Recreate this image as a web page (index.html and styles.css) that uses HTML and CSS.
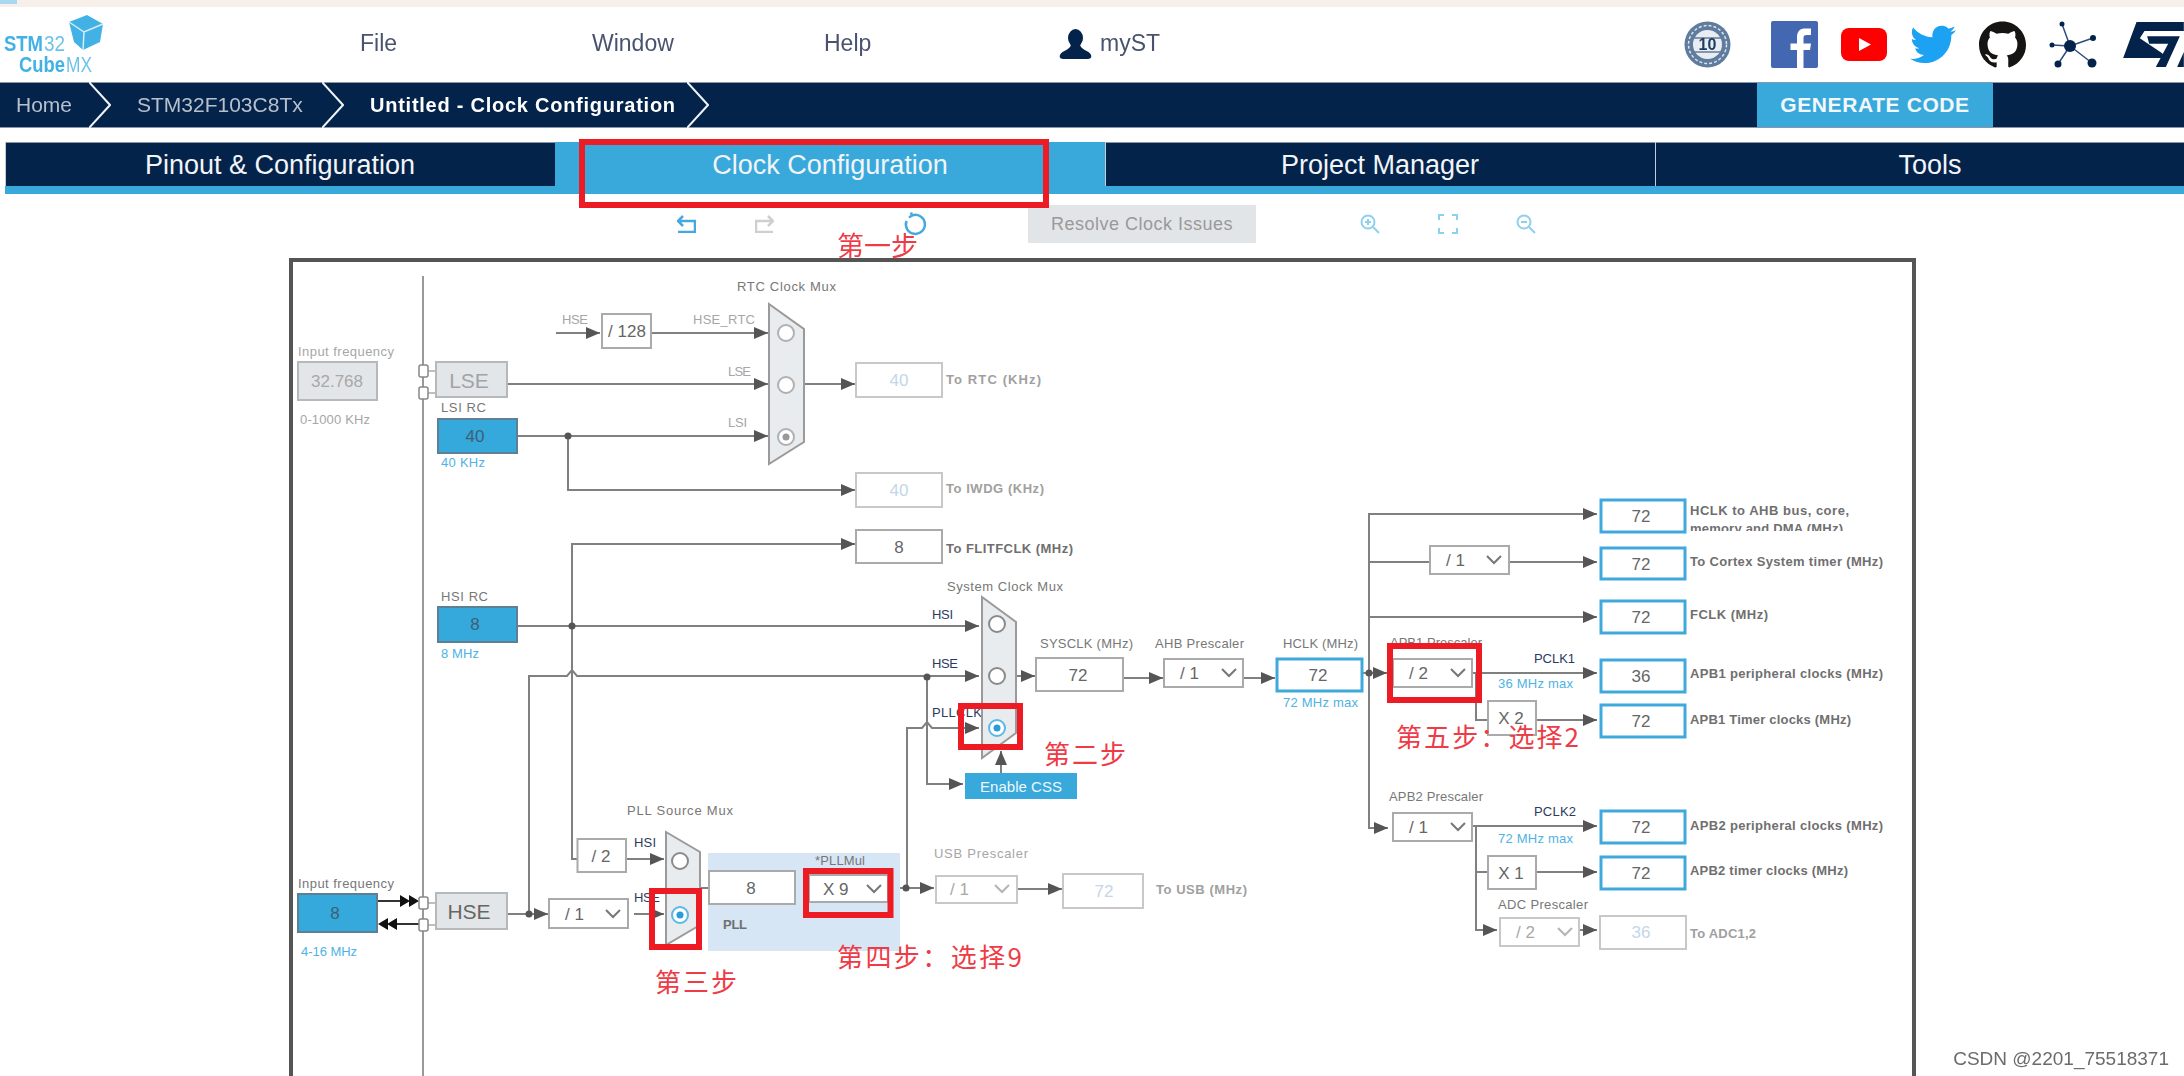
FILE: index.html
```html
<!DOCTYPE html>
<html lang="zh-CN">
<head>
    <meta charset="UTF-8">
    <meta name="viewport" content="width=device-width, initial-scale=1.0">
    <title>STM32CubeMX - Clock Configuration</title>
    <link rel="stylesheet" href="styles.css">
</head>
<body>
<div class="app">
    <div class="topstrip"><span class="topstrip-tab"></span></div>

    <header class="header">
        <svg class="logo" viewBox="0 0 110 75" width="110" height="75">
            <path class="logo-cube" d="M87 8 103 17 100 35 83 43 74 35 69 15Z"/>
            <path class="logo-edge" d="M69 15 84 25 103 17M84 25 83 43"/>
            <text class="logo-text logo-bold" x="4" y="44" textLength="39" lengthAdjust="spacingAndGlyphs">STM</text>
            <text class="logo-text" x="44" y="44" textLength="21" lengthAdjust="spacingAndGlyphs">32</text>
            <text class="logo-text logo-bold" x="19" y="65" textLength="46" lengthAdjust="spacingAndGlyphs">Cube</text>
            <text class="logo-text" x="66" y="65" textLength="26" lengthAdjust="spacingAndGlyphs">MX</text>
        </svg>
        <nav class="menu">
            <a>File</a>
            <a>Window</a>
            <a>Help</a>
        </nav>
        <div class="user">
            <svg viewBox="0 0 33 31" width="33" height="31"><ellipse cx="16.5" cy="9" rx="7.5" ry="9"/><path d="M12 15C12 21 3 21 1 26 0 29 2 30 5 30H28C31 30 33 29 32 26 30 21 21 21 21 15Z"/></svg>
            <span>myST</span>
        </div>
        <div class="social">
            <svg class="badge" viewBox="0 0 47 47" width="47" height="47">
                <circle cx="23.5" cy="23.5" r="23" fill="#5f7b9d"/>
                <circle cx="23.5" cy="23.5" r="19" fill="none" stroke="#dfe5ec" stroke-width="1.5" stroke-dasharray="3 2"/>
                <circle cx="23.5" cy="23.5" r="14.5" fill="#e9edf2"/>
                <path d="M10 17 37 17M10 31 37 31" stroke="#5f7b9d" stroke-width="1.5"/>
                <text class="badge-text" x="23.5" y="29" text-anchor="middle">10</text>
            </svg>
            <svg viewBox="0 0 47 47" width="47" height="47">
                <rect width="47" height="47" rx="2" fill="#4367b1"/>
                <path fill="#fff" d="M26 47V29H19.5V22.5H26V16C26 10 29.5 7.5 34 7.5H40V14H36C33 14 32.5 15 32.5 17V22.5H40L39 29H32.5V47Z"/>
            </svg>
            <svg viewBox="0 0 46 33" width="46" height="33">
                <rect width="46" height="33" rx="8" fill="#fe0000"/>
                <path fill="#fff" d="M18 10V23L30 16.5Z"/>
            </svg>
            <svg viewBox="0 2.3 24 19.5" width="46" height="39"><path fill="#1da1f2" d="M23.953 4.57a10 10 0 01-2.825.775 4.958 4.958 0 002.163-2.723c-.951.555-2.005.959-3.127 1.184a4.92 4.92 0 00-8.384 4.482C7.69 8.095 4.067 6.13 1.64 3.162a4.822 4.822 0 00-.666 2.475c0 1.71.87 3.213 2.188 4.096a4.904 4.904 0 01-2.228-.616v.06a4.923 4.923 0 003.946 4.827 4.996 4.996 0 01-2.212.085 4.936 4.936 0 004.604 3.417 9.867 9.867 0 01-6.102 2.105c-.39 0-.779-.023-1.17-.067a13.995 13.995 0 007.557 2.209c9.053 0 13.998-7.496 13.998-13.985 0-.21 0-.42-.015-.63A9.935 9.935 0 0024 4.59z"/></svg>
            <svg viewBox="0 0 24 24" width="47" height="47"><path fill="#161514" d="M12 .297c-6.63 0-12 5.373-12 12 0 5.303 3.438 9.8 8.205 11.385.6.113.82-.258.82-.577 0-.285-.01-1.04-.015-2.04-3.338.724-4.042-1.61-4.042-1.61C4.422 18.07 3.633 17.7 3.633 17.7c-1.087-.744.084-.729.084-.729 1.205.084 1.838 1.236 1.838 1.236 1.07 1.835 2.809 1.305 3.495.998.108-.776.417-1.305.76-1.605-2.665-.3-5.466-1.332-5.466-5.93 0-1.31.465-2.38 1.235-3.22-.135-.303-.54-1.523.105-3.176 0 0 1.005-.322 3.3 1.23.96-.267 1.98-.399 3-.405 1.02.006 2.04.138 3 .405 2.28-1.552 3.285-1.23 3.285-1.23.645 1.653.24 2.873.12 3.176.765.84 1.23 1.91 1.23 3.22 0 4.61-2.805 5.625-5.475 5.92.42.36.81 1.096.81 2.22 0 1.606-.015 2.896-.015 3.286 0 .315.21.69.825.57C20.565 22.092 24 17.592 24 12.297c0-6.627-5.373-12-12-12"/></svg>
            <svg viewBox="2049 20 48 47" width="48" height="47">
                <path fill="none" stroke="#2c4f78" stroke-width="1.5" d="M2070 45 2062 23M2070 45 2093 37M2070 45 2052 44M2070 45 2058 63M2070 45 2092 62"/>
                <g fill="#03234b"><circle cx="2070" cy="45" r="6"/><circle cx="2062" cy="23" r="2.5"/><circle cx="2093" cy="37" r="3"/><circle cx="2052" cy="44" r="2.5"/><circle cx="2058" cy="63" r="3.5"/><circle cx="2092" cy="62" r="4.5"/></g>
            </svg>
            <svg class="st-logo" viewBox="1360 35 182 135" width="61" height="45">
                <path fill="#03234b" d="M1400 35H1542V62H1424L1410 84 1476 128C1486 135 1484 143 1470 143H1360Z"/>
                <path fill="#03234b" d="M1432 78H1530L1488 170H1458L1495 100H1438ZM1522 170 1542 125V170Z"/>
            </svg>
        </div>
    </header>

    <div class="navbar">
        <div class="crumb crumb-home"><span>Home</span><svg viewBox="0 0 22 46" width="22" height="46"><path d="M0 0 21 23 0 46"/></svg></div>
        <div class="crumb crumb-mcu"><span>STM32F103C8Tx</span><svg viewBox="0 0 22 46" width="22" height="46"><path d="M0 0 21 23 0 46"/></svg></div>
        <div class="crumb crumb-current"><span>Untitled - Clock Configuration</span><svg viewBox="0 0 22 46" width="22" height="46"><path d="M0 0 21 23 0 46"/></svg></div>
        <button class="generate">GENERATE CODE</button>
    </div>

    <div class="tabs">
        <div class="tab">Pinout &amp; Configuration</div>
        <div class="tab active">Clock Configuration</div>
        <div class="tab">Project Manager</div>
        <div class="tab">Tools</div>
    </div>

    <div class="toolbar">
        <svg class="tool undo" viewBox="0 0 19 18" width="19" height="18"><path d="M6 1 1 6 6 11M1 6H18V17H1"/></svg>
        <svg class="tool redo" viewBox="0 0 19 18" width="19" height="18"><path d="M13 1 18 6 13 11M18 6H1V17H18"/></svg>
        <svg class="tool refresh" viewBox="0 0 24 24" width="24" height="24"><path d="M9 3.500A9.500 9.500 0 1 1 3.500 9M8 0.500 9 3.500 6 5.500"/></svg>
        <button class="resolve">Resolve Clock Issues</button>
        <svg class="tool soft zoom-in" viewBox="0 0 20 20" width="20" height="20"><circle cx="8" cy="8" r="6.5"/><path d="M13 13 19 19M8 5V11M5 8H11"/></svg>
        <svg class="tool soft fit" viewBox="0 0 20 20" width="20" height="20"><path d="M1 6V1H6M14 1H19V6M19 14V19H14M6 19H1V14"/></svg>
        <svg class="tool soft zoom-out" viewBox="0 0 20 20" width="20" height="20"><circle cx="8" cy="8" r="6.5"/><path d="M13 13 19 19M5 8H11"/></svg>
    </div>

    <!-- clock tree: coordinates are page pixels, hence the viewBox offset -->
    <svg class="tree" viewBox="0 258 2184 818" width="2184" height="818">
        <defs>
            <marker id="arrow" viewBox="0 0 14 12" refX="14" refY="6" markerWidth="14" markerHeight="12" markerUnits="userSpaceOnUse" orient="auto"><path d="M0 0 14 6 0 12Z" fill="#555"/></marker>
            <path id="chev" class="chev" d="M-7 -4 0 3 7 -4"/>
        </defs>

        <rect class="frame" x="291" y="260" width="1623" height="900"/>
        <path class="guide" d="M423 276V1076"/>

        <!-- wires -->
        <path class="wire" d="M556 333H600" marker-end="url(#arrow)"/>
        <path class="wire" d="M651 333H768" marker-end="url(#arrow)"/>
        <path class="wire" d="M507 384H768" marker-end="url(#arrow)"/>
        <path class="wire" d="M517 436H768" marker-end="url(#arrow)"/>
        <path class="wire" d="M804 384H855" marker-end="url(#arrow)"/>
        <path class="wire" d="M568 436V490H855" marker-end="url(#arrow)"/>
        <path class="wire" d="M572 626V544H855" marker-end="url(#arrow)"/>
        <path class="wire" d="M517 626H979" marker-end="url(#arrow)"/>
        <path class="wire" d="M572 626V859H577"/>
        <path class="wire" d="M529 914V676H567L572 670 577 676H979" marker-end="url(#arrow)"/>
        <path class="wire" d="M507 914H548" marker-end="url(#arrow)"/>
        <path class="wire" d="M626 859H664" marker-end="url(#arrow)"/>
        <path class="wire" d="M634 914H664" marker-end="url(#arrow)"/>
        <path class="wire" d="M700 888H709M795 888H809"/>
        <path class="wire" d="M888 888H934" marker-end="url(#arrow)"/>
        <path class="wire" d="M1017 889H1062" marker-end="url(#arrow)"/>
        <path class="wire" d="M907 888V728H922L927 722 932 728H979" marker-end="url(#arrow)"/>
        <path class="wire" d="M927 677V784H963" marker-end="url(#arrow)"/>
        <path class="wire" d="M1001 773V751" marker-end="url(#arrow)"/>
        <path class="wire" d="M1016 676H1035" marker-end="url(#arrow)"/>
        <path class="wire" d="M1123 678H1163" marker-end="url(#arrow)"/>
        <path class="wire" d="M1243 678H1275" marker-end="url(#arrow)"/>
        <path class="wire" d="M1362 673H1387" marker-end="url(#arrow)"/>
        <path class="wire" d="M1369 673V514H1597" marker-end="url(#arrow)"/>
        <path class="wire" d="M1369 562H1430M1509 562H1597" marker-end="url(#arrow)"/>
        <path class="wire" d="M1369 617H1597" marker-end="url(#arrow)"/>
        <path class="wire" d="M1369 673V828H1388" marker-end="url(#arrow)"/>
        <path class="wire" d="M1472 673H1597" marker-end="url(#arrow)"/>
        <path class="wire" d="M1476 673V720H1488"/>
        <path class="wire" d="M1536 720H1597" marker-end="url(#arrow)"/>
        <path class="wire" d="M1472 826H1597" marker-end="url(#arrow)"/>
        <path class="wire" d="M1476 826V930H1497" marker-end="url(#arrow)"/>
        <path class="wire" d="M1476 872H1488"/>
        <path class="wire" d="M1536 872H1597" marker-end="url(#arrow)"/>
        <path class="wire" d="M1580 930H1597" marker-end="url(#arrow)"/>
        <path class="stub" d="M428 371H436M428 393H436M428 903H436M428 925H436"/>
        <path class="wire-dark" d="M377 901H402M396 924H419"/>
        <path class="head-dark" d="M400 895 410 901 400 907ZM409 895 419 901 409 907ZM388 918 378 924 388 930ZM397 918 387 924 397 930Z"/>
        <circle class="dot" cx="568" cy="436" r="3.5"/>
        <circle class="dot" cx="572" cy="626" r="3.5"/>
        <circle class="dot" cx="529" cy="914" r="3.5"/>
        <circle class="dot" cx="906" cy="888" r="3.5"/>
        <circle class="dot" cx="927" cy="677" r="3.5"/>
        <circle class="dot" cx="1369" cy="673" r="3.5"/>

        <rect class="pin" x="419" y="365" width="9" height="12" rx="2"/>
        <rect class="pin" x="419" y="387" width="9" height="12" rx="2"/>
        <rect class="pin" x="419" y="897" width="9" height="12" rx="2"/>
        <rect class="pin" x="419" y="919" width="9" height="12" rx="2"/>

        <!-- low speed sources -->
        <text class="lbl pale" x="298" y="351" textLength="96">Input frequency</text>
        <rect class="box off" x="298" y="362" width="79" height="38"/>
        <text class="val grey mid" x="337" y="381">32.768</text>
        <text class="lbl pale" x="300" y="419" textLength="70">0-1000 KHz</text>
        <rect class="box off" x="436" y="362" width="71" height="35"/>
        <text class="src grey mid" x="469" y="380">LSE</text>
        <text class="lbl" x="441" y="407" textLength="45">LSI RC</text>
        <rect class="box blue" x="438" y="419" width="79" height="34"/>
        <text class="val ink mid" x="475" y="436">40</text>
        <text class="lbl sky" x="441" y="462" textLength="44">40 KHz</text>

        <text class="lbl" x="737" y="286" textLength="99">RTC Clock Mux</text>
        <text class="lbl pale" x="562" y="319" textLength="26">HSE</text>
        <rect class="box" x="602" y="314" width="49" height="34"/>
        <text class="val mid" x="627" y="331">/ 128</text>
        <text class="lbl pale" x="693" y="319" textLength="62">HSE_RTC</text>
        <text class="lbl pale" x="728" y="371" textLength="23">LSE</text>
        <text class="lbl pale" x="728" y="422" textLength="19">LSI</text>
        <path class="mux" d="M769 304 804 329V442L769 464Z"/>
        <circle class="radio faint" cx="786" cy="333" r="8"/>
        <circle class="radio faint" cx="786" cy="385" r="8"/>
        <circle class="radio faint" cx="786" cy="437" r="8"/>
        <circle class="radio-dot grey-dot" cx="786" cy="437" r="3.5"/>

        <rect class="box dim" x="856" y="363" width="86" height="34"/>
        <text class="val pale-blue mid" x="899" y="380">40</text>
        <text class="lbl bold grey" x="946" y="379" textLength="95">To RTC (KHz)</text>
        <rect class="box dim" x="856" y="473" width="86" height="34"/>
        <text class="val pale-blue mid" x="899" y="490">40</text>
        <text class="lbl bold grey" x="946" y="488" textLength="98">To IWDG (KHz)</text>
        <rect class="box" x="856" y="530" width="86" height="33"/>
        <text class="val mid" x="899" y="547">8</text>
        <text class="lbl bold" x="946" y="548" textLength="127">To FLITFCLK (MHz)</text>

        <!-- high speed sources -->
        <text class="lbl" x="441" y="596" textLength="47">HSI RC</text>
        <rect class="box blue" x="438" y="607" width="79" height="35"/>
        <text class="val ink mid" x="475" y="624">8</text>
        <text class="lbl sky" x="441" y="653" textLength="38">8 MHz</text>

        <text class="lbl" x="298" y="883" textLength="96">Input frequency</text>
        <rect class="box blue" x="298" y="894" width="79" height="38"/>
        <text class="val ink mid" x="335" y="913">8</text>
        <text class="lbl sky" x="301" y="951" textLength="56">4-16 MHz</text>
        <rect class="box off" x="436" y="893" width="71" height="36"/>
        <text class="src ink-grey mid" x="469" y="911">HSE</text>

        <!-- PLL -->
        <rect class="pll" x="708" y="853" width="192" height="98"/>
        <text class="lbl" x="627" y="810" textLength="106">PLL Source Mux</text>
        <rect class="box" x="577.5" y="839" width="48.5" height="33"/>
        <text class="val mid" x="601" y="856">/ 2</text>
        <rect class="box" x="549" y="899" width="79" height="29"/>
        <text class="val" x="565" y="914">/ 1</text>
        <use href="#chev" x="613" y="914"/>
        <text class="lbl navy" x="634" y="842" textLength="22">HSI</text>
        <text class="lbl navy" x="634" y="897" textLength="26">HSE</text>
        <path class="mux" d="M666 832 700 852V925L666 945Z"/>
        <circle class="radio" cx="680" cy="861" r="8"/>
        <circle class="radio on" cx="680" cy="915" r="8"/>
        <circle class="radio-dot" cx="680" cy="915" r="3.5"/>
        <rect class="box" x="709" y="871" width="86" height="33"/>
        <text class="val mid" x="751" y="888">8</text>
        <text class="lbl" x="815" y="860" textLength="50">*PLLMul</text>
        <rect class="box" x="809" y="875" width="79" height="27"/>
        <text class="val" x="823" y="889">X 9</text>
        <use href="#chev" x="874" y="889"/>
        <text class="lbl bold" x="723" y="924" textLength="24">PLL</text>

        <!-- USB -->
        <text class="lbl pale" x="934" y="853" textLength="94">USB Prescaler</text>
        <rect class="box dim" x="936" y="876" width="81" height="27"/>
        <text class="val grey" x="950" y="889">/ 1</text>
        <use href="#chev" class="chev-off" x="1002" y="889"/>
        <rect class="box dim" x="1063" y="874" width="80" height="34"/>
        <text class="val pale-blue mid" x="1104" y="891">72</text>
        <text class="lbl bold grey" x="1156" y="889" textLength="91">To USB (MHz)</text>

        <!-- system clock -->
        <text class="lbl" x="947" y="586" textLength="116">System Clock Mux</text>
        <text class="lbl navy" x="932" y="614" textLength="21">HSI</text>
        <text class="lbl navy" x="932" y="663" textLength="26">HSE</text>
        <text class="lbl navy" x="932" y="712" textLength="50">PLLCLK</text>
        <path class="mux" d="M982 597 1016 622V733L982 758Z"/>
        <circle class="radio" cx="997" cy="624" r="8"/>
        <circle class="radio" cx="997" cy="676" r="8"/>
        <circle class="radio on" cx="997" cy="728" r="8"/>
        <circle class="radio-dot" cx="997" cy="728" r="3.5"/>
        <rect class="css" x="965" y="773" width="112" height="26"/>
        <text class="lbl white mid" x="1021" y="786" textLength="82">Enable CSS</text>

        <text class="lbl" x="1040" y="643" textLength="93">SYSCLK (MHz)</text>
        <rect class="box" x="1036" y="658" width="87" height="33"/>
        <text class="val mid" x="1078" y="675">72</text>
        <text class="lbl" x="1155" y="643" textLength="89">AHB Prescaler</text>
        <rect class="box" x="1164" y="659" width="79" height="28"/>
        <text class="val" x="1180" y="673">/ 1</text>
        <use href="#chev" x="1229" y="673"/>
        <text class="lbl" x="1283" y="643" textLength="75">HCLK (MHz)</text>
        <rect class="box hot" x="1277" y="659" width="85" height="32"/>
        <text class="val mid" x="1318" y="675">72</text>
        <text class="lbl sky" x="1283" y="702" textLength="75">72 MHz max</text>

        <!-- outputs -->
        <rect class="box" x="1430" y="546" width="79" height="28"/>
        <text class="val" x="1446" y="560">/ 1</text>
        <use href="#chev" x="1494" y="560"/>

        <rect class="box hot" x="1601" y="500" width="84" height="32"/>
        <text class="val mid" x="1641" y="516">72</text>
        <text class="lbl bold" x="1690" y="510" textLength="159">HCLK to AHB bus, core,</text>
        <text class="lbl bold" x="1690" y="528" textLength="153">memory and DMA (MHz)</text>
        <rect class="mask" x="1688" y="531" width="170" height="10"/>
        <rect class="box hot" x="1601" y="548" width="84" height="31"/>
        <text class="val mid" x="1641" y="564">72</text>
        <text class="lbl bold" x="1690" y="561" textLength="193">To Cortex System timer (MHz)</text>
        <rect class="box hot" x="1601" y="601" width="84" height="32"/>
        <text class="val mid" x="1641" y="617">72</text>
        <text class="lbl bold" x="1690" y="614" textLength="78">FCLK (MHz)</text>

        <text class="lbl" x="1390" y="642" textLength="92">APB1 Prescaler</text>
        <rect class="box" x="1393" y="659" width="79" height="28"/>
        <text class="val" x="1409" y="673">/ 2</text>
        <use href="#chev" x="1458" y="673"/>
        <text class="lbl navy" x="1534" y="658" textLength="41">PCLK1</text>
        <text class="lbl sky" x="1498" y="683" textLength="75">36 MHz max</text>
        <rect class="box hot" x="1601" y="660" width="84" height="32"/>
        <text class="val mid" x="1641" y="676">36</text>
        <text class="lbl bold" x="1690" y="673" textLength="193">APB1 peripheral clocks (MHz)</text>
        <rect class="box" x="1488" y="701" width="48" height="34"/>
        <text class="val mid" x="1511" y="718">X 2</text>
        <rect class="box hot" x="1601" y="705" width="84" height="32"/>
        <text class="val mid" x="1641" y="721">72</text>
        <text class="lbl bold" x="1690" y="719" textLength="161">APB1 Timer clocks (MHz)</text>

        <text class="lbl" x="1389" y="796" textLength="94">APB2 Prescaler</text>
        <rect class="box" x="1393" y="813" width="79" height="28"/>
        <text class="val" x="1409" y="827">/ 1</text>
        <use href="#chev" x="1458" y="827"/>
        <text class="lbl navy" x="1534" y="811" textLength="42">PCLK2</text>
        <text class="lbl sky" x="1498" y="838" textLength="75">72 MHz max</text>
        <rect class="box hot" x="1601" y="811" width="84" height="32"/>
        <text class="val mid" x="1641" y="827">72</text>
        <text class="lbl bold" x="1690" y="825" textLength="193">APB2 peripheral clocks (MHz)</text>
        <rect class="box" x="1488" y="856" width="48" height="33"/>
        <text class="val mid" x="1511" y="873">X 1</text>
        <rect class="box hot" x="1601" y="857" width="84" height="32"/>
        <text class="val mid" x="1641" y="873">72</text>
        <text class="lbl bold" x="1690" y="870" textLength="158">APB2 timer clocks (MHz)</text>

        <text class="lbl" x="1498" y="904" textLength="90">ADC Prescaler</text>
        <rect class="box dim" x="1500" y="918" width="79" height="28"/>
        <text class="val grey" x="1516" y="932">/ 2</text>
        <use href="#chev" class="chev-off" x="1565" y="932"/>
        <rect class="box dim" x="1600" y="916" width="86" height="33"/>
        <text class="val pale-blue mid" x="1641" y="932">36</text>
        <text class="lbl bold grey" x="1690" y="933" textLength="66">To ADC1,2</text>

        <!-- red notes added on top of the screenshot -->
        <rect class="note-box" x="652" y="891" width="47" height="56"/>
        <rect class="note-box" x="806" y="871" width="84.5" height="44"/>
        <rect class="note-box" x="961" y="706" width="59" height="41"/>
        <rect class="note-box" x="1390" y="646" width="89" height="54"/>
        <text class="note" x="1044" y="752" textLength="82">第二步</text>
        <text class="note" x="655" y="980" textLength="82">第三步</text>
        <text class="note" x="837" y="955" textLength="185">第四步：选择9</text>
        <text class="note" x="1396" y="735" textLength="183">第五步：选择2</text>
    </svg>

    <div class="tab-note"></div>
    <div class="step-one">第一步</div>
</div>
<div class="watermark">CSDN @2201_75518371</div>
</body>
</html>
```

FILE: styles.css
```css
html, body {
    margin: 0;
    padding: 0;
}
body {
    width: 2184px;
    height: 1076px;
    overflow: hidden;
    position: relative;
    background-color: white;
    font-family: "Liberation Sans", Arial, sans-serif;
}
.app {
    position: relative;
    width: 2184px;
    height: 1076px;
    overflow: hidden;
    filter: blur(0.7px);
}

/* browser strip */
.topstrip {
    height: 7px;
    background-color: #f7f0ea;
}
.topstrip-tab {
    display: block;
    width: 17px;
    height: 4px;
    background-color: #a9d8f0;
}

/* header */
.header {
    display: flex;
    align-items: center;
    height: 75px;
}
.logo {
    flex: none;
}
.logo-cube {
    fill: #42b1e5;
}
.logo-edge {
    fill: none;
    stroke: #d5eefa;
    stroke-width: 1.5;
}
.logo-text {
    font-size: 22px;
    fill: #6cc3ea;
}
.logo-bold {
    font-weight: bold;
    fill: #42b1e5;
}
.menu {
    display: flex;
    margin-left: 250px;
    margin-bottom: 2px;
    font-size: 23px;
    color: #49536f;
}
.menu a {
    width: 232px;
}
.user {
    display: flex;
    align-items: center;
    gap: 8px;
    margin-left: 3px;
    font-size: 23px;
    color: #49536f;
}
.user span {
    margin-bottom: 2px;
}
.user svg {
    fill: #03234b;
}
.social {
    display: flex;
    align-items: center;
    gap: 23px;
    margin-left: auto;
}
.social svg {
    flex: none;
}
.badge {
    margin-right: 17px;
}
.badge-text {
    font-size: 16px;
    font-weight: bold;
    fill: #1f3a5f;
}
.st-logo {
    margin-left: 3px;
}

/* breadcrumb bar */
.navbar {
    display: flex;
    align-items: center;
    height: 46px;
    background-color: #03234b;
    box-shadow: inset 0 1px 0 #8b97a8, inset 0 -1px 0 #8b97a8;
    font-size: 21px;
}
.crumb {
    display: flex;
    align-items: center;
    justify-content: space-between;
    height: 46px;
    box-sizing: border-box;
    color: #b7c0cc;
    white-space: nowrap;
}
.crumb svg {
    flex: none;
    fill: none;
    stroke: #f0f2f5;
    stroke-width: 2;
}
.crumb-home {
    width: 111px;
    padding-left: 16px;
}
.crumb-mcu {
    width: 233px;
    padding-left: 26px;
}
.crumb-current {
    width: 365px;
    padding-left: 26px;
    color: white;
    font-weight: bold;
    font-size: 20px;
    letter-spacing: 0.75px;
}
.generate {
    width: 236px;
    height: 44px;
    margin-left: auto;
    margin-right: 191px;
    border: none;
    background-color: #39a9dc;
    color: #f2f8fc;
    font-family: inherit;
    font-size: 21px;
    font-weight: bold;
    letter-spacing: 0.6px;
}

/* main tabs */
.tabs {
    display: grid;
    grid-template-columns: repeat(4, 550px);
    height: 52px;
    margin-top: 14px;
    margin-left: 5px;
    overflow: hidden;
    box-sizing: border-box;
    border-bottom: 8px solid #39a9dc;
}
.tab {
    display: flex;
    align-items: center;
    justify-content: center;
    padding-top: 2px;
    background-color: #03234b;
    color: #f2f4f7;
    font-size: 27px;
    box-shadow: inset 1px 0 0 #c5ccd6, inset 0 1px 0 #8b97a8;
}
.tab.active {
    background-color: #39a9dc;
    box-shadow: none;
}

/* toolbar */
.toolbar {
    display: flex;
    align-items: center;
    height: 64px;
    padding-left: 677px;
    padding-bottom: 4px;
    box-sizing: border-box;
}
.tool {
    flex: none;
    fill: none;
    stroke: #45a8de;
    stroke-width: 2.5;
}
.redo {
    margin-left: 59px;
    stroke: #cfcfcf;
}
.refresh {
    margin-left: 129px;
}
.tool.soft {
    stroke: #8fd0ee;
    stroke-width: 2;
}
.zoom-in {
    margin-left: 104px;
}
.fit {
    margin-left: 58px;
}
.zoom-out {
    margin-left: 58px;
}
.resolve {
    width: 228px;
    height: 38px;
    margin-left: 101px;
    border: none;
    background-color: #e2e5e8;
    color: #999;
    font-family: inherit;
    font-size: 18px;
    letter-spacing: 0.5px;
}

/* clock tree */
.tree {
    display: block;
}
.tree text {
    dominant-baseline: central;
}
.frame {
    fill: white;
    stroke: #555;
    stroke-width: 4;
}
.guide {
    stroke: #999;
    stroke-width: 2;
    fill: none;
}
.wire {
    fill: none;
    stroke: #808080;
    stroke-width: 2;
}
.stub {
    stroke: #aaa;
    stroke-width: 1.5;
}
.wire-dark {
    stroke: #333;
    stroke-width: 2;
}
.head-dark {
    fill: #111;
}
.dot {
    fill: #555;
}
.pin {
    fill: white;
    stroke: #888;
    stroke-width: 1.5;
}
.box {
    fill: white;
    stroke: #aaa;
    stroke-width: 2;
}
.box.off {
    fill: #e3e6e8;
    stroke: #b5b9bc;
}
.box.dim {
    stroke: #c8c8c8;
}
.box.blue {
    fill: #35a8dc;
    stroke: #5f7f92;
}
.box.hot {
    stroke: #3fa9dc;
    stroke-width: 3;
}
.pll {
    fill: #d6e6f4;
}
.mux {
    fill: #e8ecef;
    stroke: #9a9a9a;
    stroke-width: 2;
}
.radio {
    fill: white;
    stroke: #8a8a8a;
    stroke-width: 2;
}
.radio.faint {
    stroke: #b0b0b0;
}
.radio.on {
    stroke: #5ab8e6;
}
.radio-dot {
    fill: #2a9cdc;
}
.grey-dot {
    fill: #999;
}
.css {
    fill: #39a9dc;
}
.mask {
    fill: white;
}
.chev {
    fill: none;
    stroke: #777;
    stroke-width: 2;
}
.chev-off {
    opacity: 0.55;
}

.lbl {
    font-size: 13px;
    fill: #777;
}
.lbl.bold {
    font-weight: bold;
    fill: #6f6f6f;
}
.lbl.pale {
    fill: #a6a6a6;
}
.lbl.grey {
    fill: #a0a0a0;
}
.lbl.sky {
    fill: #4fb2e4;
}
.lbl.navy {
    fill: #2b3b60;
}
.lbl.white {
    fill: #eef7fc;
    font-size: 15px;
}
.val {
    font-size: 17px;
    fill: #666;
}
.val.grey {
    fill: #a8a8a8;
}
.val.ink {
    fill: #3f5f74;
}
.val.pale-blue {
    fill: #c3d6ea;
}
.src {
    font-size: 21px;
}
.src.grey {
    fill: #a0a4a8;
}
.src.ink-grey {
    fill: #666;
}
.mid {
    text-anchor: middle;
}

/* red notes */
.note-box {
    fill: none;
    stroke: #ed1c24;
    stroke-width: 6;
}
.note {
    font-family: "Noto Sans CJK SC", sans-serif;
    font-size: 26px;
    fill: #ee3b46;
}
.tab-note {
    position: absolute;
    left: 579px;
    top: 139px;
    width: 470px;
    height: 69px;
    box-sizing: border-box;
    border: 6px solid #ed1c24;
}
.step-one {
    position: absolute;
    left: 837px;
    top: 228px;
    font-family: "Noto Sans CJK SC", sans-serif;
    font-size: 27px;
    line-height: 34px;
    color: #ee3b46;
}
.watermark {
    position: absolute;
    right: 15px;
    top: 1048px;
    font-size: 19px;
    color: #6b6b6b;
}
```
